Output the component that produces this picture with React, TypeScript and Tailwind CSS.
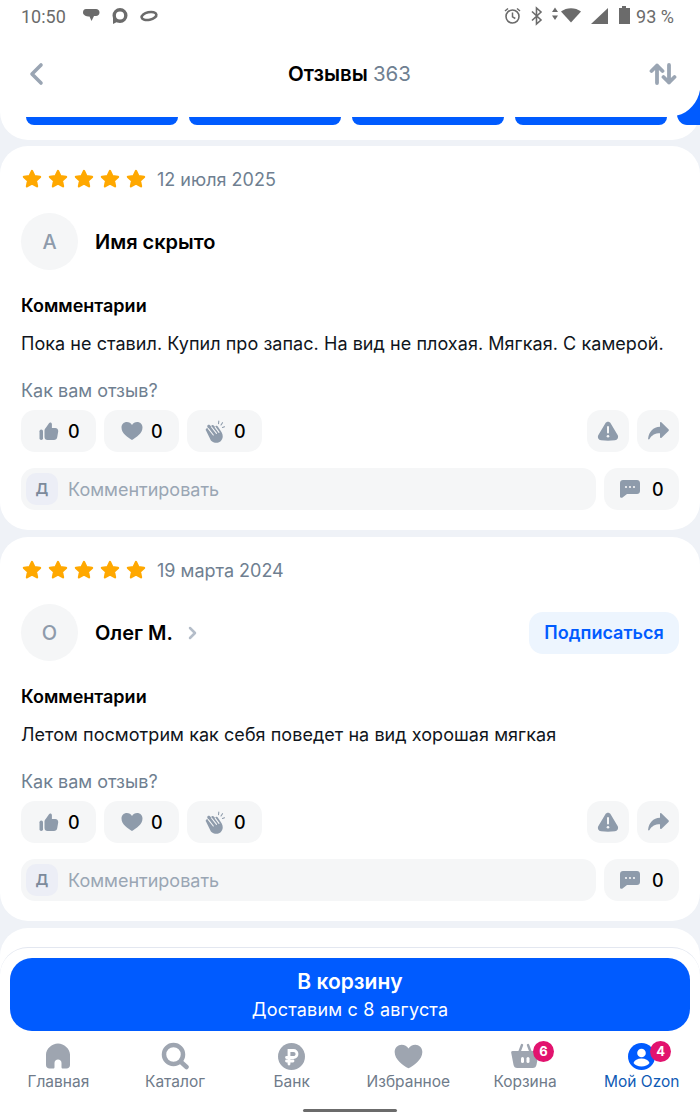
import React from 'react';

const font = "font-['Inter','Noto_Sans',sans-serif]";

const Star = () => (
  <svg width="22" height="22" viewBox="0 0 24 24" className="text-[#ffa800]" fill="currentColor" stroke="currentColor" strokeWidth="2.5" strokeLinejoin="round">
    <path d="M12 3.2l2.7 5.7 6.1.8-4.500 4.200 1.200 6.100L12 17l-5.500 3 1.200-6.100-4.500-4.200 6.100-.8z" />
  </svg>
);

const ThumbIcon = () => (
  <svg width="20" height="20" viewBox="0 0 20 20" fill="#8e9bab">
    <rect x="0.500" y="8.500" width="3.500" height="10.500" rx="1.700" />
    <path d="M5.500 9.500c0-1 .5-1.700 1.200-2.500L10 2.300c.8-1.300 2.900-.8 2.900 1v3.700h3.300c2 0 3.300 1.700 3 3.500l-1 5.800c-.3 1.700-1.600 2.700-3.200 2.700H8.500c-1.700 0-3-1.300-3-3z" />
  </svg>
);

const HeartIcon = ({ w = 22, color = '#8e9bab' }: { w?: number; color?: string }) => (
  <svg width={w} height={w} viewBox="0 0 22 22" fill={color}>
    <path d="M11 20C7 17.500 0.500 13.500 0.500 7.500 0.500 4.200 3 2 5.800 2 8 2 10 3 11 5c1-2 3-3 5.200-3 2.800 0 5.300 2.200 5.300 5.500 0 6-6.500 10-10.500 12.500z" />
  </svg>
);

const ClapIcon = () => (
  <svg width="20" height="23" viewBox="0 0 20 23">
    <path d="M1 10.500c-1-1.500 1-3 2.300-1.800L2.500 7c-1-1.500 1-3 2.500-1.700L6.500 7c-.8-1.500 1-2.800 2.300-1.500l1.500 1.800c-.3-1.300 1.400-2.200 2.300-1l4 6c1.800 3 1.500 6.800-1.200 9.100-3 2.300-7 1.500-9.500-1z" fill="#8e9bab" />
    <path d="M3.300 8.700l5 6.300M6.500 7l5 6.300M10.300 7.300l3.700 5" fill="none" stroke="#f5f6f7" strokeWidth="1.100" strokeLinecap="round" />
    <path d="M13.500 3.800l.3-2.800M16 5l1.500-2.300M17.500 7.500l2-.8" fill="none" stroke="#8e9bab" strokeWidth="1.100" strokeLinecap="round" />
  </svg>
);

const WarnIcon = () => (
  <svg width="22" height="20" viewBox="0 0 22 20">
    <path d="M8.400 2.200c1.200-2 4-2 5.200 0l7 11.800c1.300 2.300-.1 5-2.700 5.300-4.600.6-9.200.6-13.800 0-2.600-.3-4-3-2.700-5.300z" fill="#8e9bab" />
    <rect x="10" y="5" width="2" height="7.500" rx="1" fill="#f5f6f7" />
    <circle cx="11" cy="15.200" r="1.300" fill="#f5f6f7" />
  </svg>
);

const ShareIcon = () => (
  <svg width="21" height="18" viewBox="0 0 21 18" fill="#8e9bab">
    <path d="M12 .8c0-.7.800-1 1.300-.5l7.200 6.900c.5.500.5 1.200 0 1.700l-7.200 7c-.5.500-1.300.1-1.300-.6v-4C7 11.300 4 13 1.500 17c-.5.700-1.500.4-1.400-.4C1 9.500 5 5.200 12 4.700z" />
  </svg>
);

const ChatIcon = () => (
  <svg width="20" height="18" viewBox="0 0 20 18">
    <path d="M3 0h14c1.700 0 3 1.300 3 3v8c0 1.700-1.300 3-3 3H7l-4.500 3.500c-.9.700-2.500.3-2.500-1V3c0-1.700 1.300-3 3-3z" fill="#8e9bab" />
    <circle cx="6" cy="7" r="1.100" fill="#f5f6f7" />
    <circle cx="10" cy="7" r="1.100" fill="#f5f6f7" />
    <circle cx="14" cy="7" r="1.100" fill="#f5f6f7" />
  </svg>
);

const Chip = ({ icon }: { icon: React.ReactNode }) => (
  <div className="flex h-[42px] w-[75px] items-center rounded-[14px] bg-[#f5f6f7] pl-4">
    <span className="flex w-[24px] justify-center">{icon}</span>
    <span className="ml-[7px] text-[18px] font-medium text-black">0</span>
  </div>
);

const SquareBtn = ({ children }: { children: React.ReactNode }) => (
  <div className="flex h-[42px] w-[42px] items-center justify-center rounded-[14px] bg-[#f5f6f7]">{children}</div>
);

type Review = { date: string; letter: string; name: string; link?: boolean; text: string };

const reviews: Review[] = [
  {
    date: '12 июля 2025',
    letter: 'А',
    name: 'Имя скрыто',
    text: 'Пока не ставил. Купил про запас. На вид не плохая. Мягкая. С камерой.',
  },
  {
    date: '19 марта 2024',
    letter: 'О',
    name: 'Олег М.',
    link: true,
    text: 'Летом посмотрим как себя поведет на вид хорошая мягкая',
  },
];

const ReviewCard = ({ r }: { r: Review }) => (
  <section className="h-[384px] rounded-[28px] bg-white px-[21px] pt-[20px]">
    <div className="flex h-[26px] items-center">
      <div className="flex gap-[4px]">
        {[1, 2, 3, 4, 5].map((i) => <Star key={i} />)}
      </div>
      <span className="ml-[10px] text-[18px] text-[#6f7f91]">{r.date}</span>
    </div>
    <div className="mt-[21px] flex h-[57px] items-center">
      <div className="flex h-[57px] w-[57px] items-center justify-center rounded-full bg-[#f5f6f7] text-[20px] font-medium text-[#8e9bab]">
        {r.letter}
      </div>
      <span className="ml-[17px] text-[20px] font-semibold leading-[26px] text-black">{r.name}</span>
      {r.link && (
        <svg width="10" height="14" viewBox="0 0 10 14" fill="none" stroke="#b4bdc9" strokeWidth="2.500" strokeLinecap="round" strokeLinejoin="round" className="ml-[15px]">
          <path d="M2 2l5 5-5 5" />
        </svg>
      )}
      {r.link && (
        <div className="ml-auto flex h-[42px] w-[150px] items-center justify-center rounded-[14px] bg-[#edf5fe] text-[18px] font-semibold text-[#005bff]">
          Подписаться
        </div>
      )}
    </div>
    <div className="mt-[25px] text-[18px] font-semibold leading-[22px] text-black">Комментарии</div>
    <div className="mt-[16px] whitespace-nowrap text-[18px] leading-[22px] tracking-[0.05px] text-[#10151c]">{r.text}</div>
    <div className="mt-[25px] text-[18px] leading-[22px] text-[#6f7f91]">Как вам отзыв?</div>
    <div className="mt-[8px] flex items-center gap-2">
      <Chip icon={<ThumbIcon />} />
      <Chip icon={<HeartIcon />} />
      <Chip icon={<ClapIcon />} />
      <div className="ml-auto flex gap-2">
        <SquareBtn><WarnIcon /></SquareBtn>
        <SquareBtn><ShareIcon /></SquareBtn>
      </div>
    </div>
    <div className="mt-[16px] flex gap-2">
      <div className="flex h-[42px] flex-1 items-center rounded-[14px] bg-[#f5f6f7] pl-[5px]">
        <div className="flex h-[32px] w-[32px] items-center justify-center rounded-[10px] bg-[#eceef6] text-[15px] font-semibold text-[#7c8a9b]">Д</div>
        <span className="ml-[10px] text-[18px] text-[#9aa6b4]">Комментировать</span>
      </div>
      <div className="flex h-[42px] w-[75px] items-center rounded-[14px] bg-[#f5f6f7] pl-4">
        <ChatIcon />
        <span className="ml-[12px] text-[18px] font-medium text-black">0</span>
      </div>
    </div>
  </section>
);

const NavItem = ({ label, icon, active }: { label: string; icon: React.ReactNode; active?: boolean }) => (
  <div className="flex flex-1 flex-col items-center">
    <div className="relative flex h-[28px] items-center justify-center">{icon}</div>
    <span className={`mt-[2px] whitespace-nowrap text-[15.500px] leading-[20px] ${active ? 'text-[#0f5bb5]' : 'text-[#6f7b8a]'}`}>{label}</span>
  </div>
);

const Badge = ({ n }: { n: number }) => (
  <span className="absolute left-[22px] top-[-1px] flex h-[21px] w-[21px] items-center justify-center rounded-full bg-[#e2136e] text-[13px] font-bold text-white">{n}</span>
);

export default function App() {
  return (
    <div className={`relative h-[1120px] w-[700px] overflow-hidden bg-[#eff2f7] ${font}`}>
      {/* top block */}
      <div className="relative h-[140px] rounded-b-[28px] bg-white">
        <div className="flex h-[32px] items-center justify-between pl-[21px] pr-[26px] font-['Roboto',sans-serif] text-[18px] text-[#6b6b6b]">
          <div className="flex items-center">
            <span>10:50</span>
            <svg width="80" height="20" viewBox="0 0 80 20" fill="#6b6b6b" className="ml-[14px]">
              <path d="M6 3h10c2 0 3.500 1.500 3.500 3.500S18 10 16 10h-2l-2.500 5L9.500 10.500C6 10.500 3 9 3 6.500 3 4.500 4 3 6 3z" />
              <circle cx="40" cy="9.500" r="5.800" fill="none" stroke="#6b6b6b" strokeWidth="3.400" />
              <path d="M33 9v9l5-2.500z" />
              <ellipse cx="69" cy="10" rx="7.500" ry="3.800" fill="none" stroke="#6b6b6b" strokeWidth="2.600" transform="rotate(-12 69 10)" />
            </svg>
          </div>
          <div className="flex items-center">
            <svg width="128" height="20" viewBox="0 0 128 20" fill="#6b6b6b">
              <circle cx="8.500" cy="10.500" r="6.500" fill="none" stroke="#6b6b6b" strokeWidth="1.600" />
              <path d="M8.500 6.500v4.300l2.800 1.700M1 5l3-2.500M16 5l-3-2.500" fill="none" stroke="#6b6b6b" strokeWidth="1.500" />
              <path d="M28 5.500l9 8.500-4.500 4V2L37 6l-9 8.500" fill="none" stroke="#6b6b6b" strokeWidth="1.600" />
              <path d="M51 1.500l3 4.500h-6zM51 14l-3-4.500h6z" />
              <path d="M57 5.500C62.500 1 71.500 1 77 5.500L67 16.500z" />
              <path d="M104 2v16H87z" />
              <path d="M118 0h4v2h4v16h-11V2h3z" />
            </svg>
            <span className="ml-[4px]">93 %</span>
          </div>
        </div>
        <div className="mt-[10px] flex h-[64px] items-center justify-between pl-[28px] pr-[23px]">
          <svg width="16" height="24" viewBox="0 0 16 24" fill="none" stroke="#9aa5b3" strokeWidth="3.600" strokeLinecap="round" strokeLinejoin="round" className="mr-[6px]">
            <path d="M13 3L4 12l9 9" />
          </svg>
          <div className="text-[20.500px] font-semibold text-black">
            Отзывы <span className="font-normal text-[#6f7f91]">363</span>
          </div>
          <svg width="28" height="24" viewBox="0 0 28 24" fill="none" stroke="#9aa5b3" strokeWidth="3.800" strokeLinecap="round" strokeLinejoin="round">
            <path d="M8 21V3.500M2.500 9L8 3.500 13.500 9M20 3v17.500M14.500 15l5.500 5.500 5.500-5.500" />
          </svg>
        </div>
        <div className="mt-[11px] flex gap-[11px] overflow-hidden pl-[26px]">
          {[1, 2, 3, 4].map((i) => (
            <div key={i} className="h-[8px] w-[152px] shrink-0 rounded-b-[10px] bg-[#005bff]" />
          ))}
        </div>
        <svg width="24" height="36" viewBox="0 0 24 36" fill="#005bff" className="absolute right-0 top-[90px]">
          <path d="M24 0C22 12 13 23 1 25.500 2 31 6 35 11 35h13z" />
        </svg>
      </div>

      {/* reviews */}
      <div className="mt-[6px] flex flex-col gap-[7px]">
        {reviews.map((r) => <ReviewCard key={r.date} r={r} />)}
        <div className="h-[200px] rounded-[28px] bg-white" />
      </div>

      {/* bottom bar over the list */}
      <div className="absolute inset-x-0 bottom-0 h-[173px] rounded-t-[28px] border-t border-[#e3e7f0] bg-white px-[10px] pt-[10px]">
        <div className="flex h-[73px] flex-col items-center justify-center rounded-[22px] bg-[#005bff] pt-[3px] text-white">
          <span className="text-[21px] font-semibold leading-[28px]">В корзину</span>
          <span className="text-[18px] leading-[28px] tracking-[0.2px]">Доставим с 8 августа</span>
        </div>
        <div className="-mx-[10px] mt-[11px] flex">
          <NavItem
            label="Главная"
            icon={
              <svg width="26" height="26" viewBox="0 0 26 26" fill="#9ea5b0">
                <path d="M1 11.500C1 6 7 .5 13 .5S25 6 25 11.500V22c0 2-1.500 3.500-3.500 3.500H18c-1 0-1.500-.5-1.500-1.500v-4c0-2-1.500-3.500-3.500-3.500S9.500 18 9.500 20v4c0 1-.5 1.500-1.500 1.500H4.500C2.500 25.500 1 24 1 22z" />
              </svg>
            }
          />
          <NavItem
            label="Каталог"
            icon={
              <svg width="28" height="28" viewBox="0 0 28 28" fill="none" stroke="#9ea5b0" strokeLinecap="round">
                <circle cx="12.500" cy="12.500" r="9.500" strokeWidth="4.500" />
                <path d="M20 20l5.500 5" strokeWidth="4.500" />
              </svg>
            }
          />
          <NavItem
            label="Банк"
            icon={
              <svg width="27" height="27" viewBox="0 0 27 27">
                <circle cx="13.500" cy="13.500" r="13.500" fill="#9ea5b0" />
                <path d="M11 21V7.500h4.500a3.500 3.500 0 0 1 0 7H8.500M8.500 18H15" fill="none" stroke="#fff" strokeWidth="2.800" strokeLinecap="round" />
              </svg>
            }
          />
          <NavItem label="Избранное" icon={<HeartIcon w={29} color="#9ea5b0" />} />
          <NavItem
            label="Корзина"
            icon={
              <>
                <svg width="28" height="26" viewBox="0 0 28 26">
                  <path d="M8 10l3-8M20 10L17 2" stroke="#9ea5b0" strokeWidth="2.400" strokeLinecap="round" />
                  <path d="M1.500 8h25c.9 0 1.500.8 1.300 1.700l-2.300 12c-.3 2-1.700 3.300-3.700 3.300H6.200c-2 0-3.400-1.300-3.700-3.300L.2 9.700C0 8.800.6 8 1.500 8z" fill="#9ea5b0" />
                  <rect x="10" y="14" width="3" height="6" rx="1.500" fill="#fff" />
                  <rect x="15.500" y="14" width="3" height="6" rx="1.500" fill="#fff" />
                </svg>
                <Badge n={6} />
              </>
            }
          />
          <NavItem
            active
            label="Мой Ozon"
            icon={
              <>
                <svg width="27" height="27" viewBox="0 0 27 27">
                  <circle cx="13.500" cy="13.500" r="13.500" fill="#005bff" />
                  <circle cx="13.500" cy="10" r="4.300" fill="#fff" />
                  <path d="M5.500 20c1-3 4-4.500 8-4.500s7 1.500 8 4.500c-1.500 2-4.500 3.500-8 3.500s-6.500-1.500-8-3.500z" fill="#fff" />
                </svg>
                <Badge n={4} />
              </>
            }
          />
        </div>
      </div>
      <div className="absolute bottom-[8px] left-[303px] h-[3px] w-[94px] rounded-full bg-[#6b6b6b]" />
    </div>
  );
}
